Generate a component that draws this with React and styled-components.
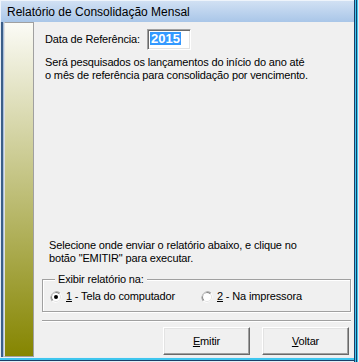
import styled, { createGlobalStyle } from 'styled-components'

const GlobalStyle = createGlobalStyle`
  body {
    margin: 0;
    background: #fff;
    font-family: "Liberation Sans", Arial, sans-serif;
  }
`

const Window = styled.div`
  width: 359px;
  height: 362px;
  box-sizing: border-box;
  padding: 0 5px 5px 0;
  display: flex;
  flex-direction: column;
  background: #f0f0f0;
  box-shadow:
    inset -1px 0 #dff0f8,
    inset -2px 0 #3ec6ee,
    inset -3px 0 #173d66,
    inset -4px 0 #3ec6ee,
    inset -5px 0 #1b3f68,
    inset 0 -1px #dff0f8,
    inset 0 -2px #1b3f68,
    inset 0 -4px #3ec6ee,
    inset 0 -5px #e8eef4;
`

const TitleBar = styled.div`
  height: 22px;
  flex-shrink: 0;
  display: flex;
  align-items: center;
  padding-left: 7px;
  background: linear-gradient(#d3e2f4, #a9c6e8);
  box-shadow: inset 1px 1px #eef4fb;
`

const Title = styled.span`
  font-size: 12px;
  color: #000;
  padding-top: 1px;
`

const Body = styled.div`
  flex: 1;
  display: flex;
  padding-left: 4px;
  box-shadow:
    inset 1px 0 #e4ecf4,
    inset 3px 0 #3b5e88,
    inset 4px 0 #a9bfd9;
`

const SidePanel = styled.div`
  width: 28px;
  border: 1px solid #a0a0a0;
  border-left-color: #e0e0e0;
  background: linear-gradient(#fbfbf6, #858500);
`

const Content = styled.div`
  flex: 1;
  display: flex;
  flex-direction: column;
  font-size: 11px;
  line-height: 13px;
  letter-spacing: -0.15px;
  color: #000;
`

const RefRow = styled.div`
  display: flex;
  align-items: center;
  margin: 7px 0 0 11px;
`

const Label = styled.span`
  margin-right: 7px;
`

const YearBox = styled.div`
  width: 44px;
  height: 21px;
  box-sizing: border-box;
  padding: 2px 0 0 2px;
  background: #fff;
  border: 1px solid;
  border-color: #a0a0a0 #fff #fff #a0a0a0;
  box-shadow: inset 1px 1px #696969, inset -1px -1px #e3e3e3;
`

const Selected = styled.span`
  display: inline-block;
  background: #3399ff;
  color: #fff;
  font-weight: bold;
  font-size: 13px;
  line-height: 13px;
  letter-spacing: 0;
  padding: 0 1px;
`

const Text = styled.p`
  margin: ${p => p.$top}px 0 0 ${p => p.$left}px;
`

const Bottom = styled.div`
  margin-top: auto;
  display: flex;
  flex-direction: column;
`

const GroupBox = styled.div`
  position: relative;
  height: 33px;
  box-sizing: border-box;
  margin: 14px 3px 0 8px;
  padding: 2px 0 0 7px;
  display: flex;
  align-items: center;
  border: 1px solid #a0a0a0;
  box-shadow: inset 1px 1px #fff, 1px 1px #fff;
`

const Legend = styled.span`
  position: absolute;
  left: 12px;
  top: -7px;
  padding: 0 3px;
  background: #f0f0f0;
`

const Option = styled.label`
  display: flex;
  align-items: center;
  gap: 4px;
  width: ${p => p.$width}px;
`

const Key = styled.span`
  text-decoration: underline;
`

const Separator = styled.div`
  height: 1px;
  margin: 8px 3px 0 8px;
  background: #a0a0a0;
  box-shadow: 0 1px #fff;
`

const ButtonRow = styled.div`
  display: flex;
  justify-content: flex-end;
  gap: 12px;
  margin: 6px 5px 2px 0;
`

const Button = styled.button`
  width: 87px;
  height: 28px;
  padding: 0;
  font-family: inherit;
  font-size: 11px;
  letter-spacing: -0.15px;
  color: #000;
  background: #f0f0f0;
  border: 1px solid;
  border-color: #fff #696969 #696969 #fff;
  box-shadow: inset -1px -1px #a0a0a0, inset 1px 1px #e3e3e3;
`

const Radio = ({ checked }) => (
  <svg width="12" height="12" viewBox="0 0 12 12">
    <path d="M10.2 1.8 A6 6 0 0 0 1.8 10.2" fill="#a0a0a0" />
    <path d="M1.8 10.2 A6 6 0 0 0 10.2 1.8" fill="#fff" />
    <circle cx="6" cy="6" r="5" fill="#e3e3e3" />
    <path d="M9.5 2.5 A5 5 0 0 0 2.5 9.5 L6 6 Z" fill="#696969" />
    <circle cx="6" cy="6" r="4" fill="#fff" />
    {checked && <circle cx="6" cy="6" r="2" fill="#000" />}
  </svg>
)

const App = () => {
  return (
    <Window>
      <GlobalStyle />
      <TitleBar>
        <Title>Relatório de Consolidação Mensal</Title>
      </TitleBar>
      <Body>
        <SidePanel />
        <Content>
          <RefRow>
            <Label>Data de Referência:</Label>
            <YearBox>
              <Selected>2015</Selected>
            </YearBox>
          </RefRow>
          <Text $top={6} $left={11}>
            Será pesquisados os lançamentos do início do ano até
            <br />
            o mês de referência para consolidação por vencimento.
          </Text>

          <Bottom>
            <Text $top={0} $left={15}>
              Selecione onde enviar o relatório abaixo, e clique no
              <br />
              botão "EMITIR" para executar.
            </Text>
            <GroupBox>
              <Legend>Exibir relatório na:</Legend>
              <Option $width={151}>
                <Radio checked />
                <span><Key>1</Key> - Tela do computador</span>
              </Option>
              <Option $width={120}>
                <Radio />
                <span><Key>2</Key> - Na impressora</span>
              </Option>
            </GroupBox>
            <Separator />
            <ButtonRow>
              <Button><Key>E</Key>mitir</Button>
              <Button><Key>V</Key>oltar</Button>
            </ButtonRow>
          </Bottom>
        </Content>
      </Body>
    </Window>
  )
}

export default App
